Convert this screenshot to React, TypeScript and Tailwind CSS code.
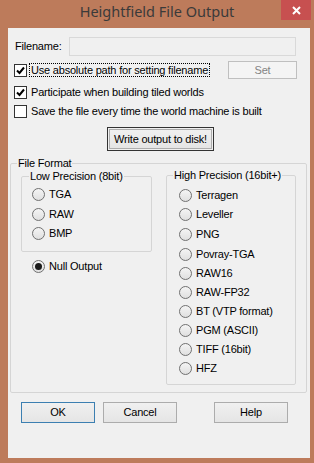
import React from 'react'

const lowFormats = ['TGA', 'RAW', 'BMP']

const highFormats: [string, boolean][] = [
  ['Terragen', false],
  ['Leveller', false],
  ['PNG', true],
  ['Povray-TGA', true],
  ['RAW16', false],
  ['RAW-FP32', false],
  ['BT (VTP format)', false],
  ['PGM (ASCII)', false],
  ['TIFF (16bit)', false],
  ['HFZ', false],
]

function CheckBox({ checked }: { checked: boolean }) {
  return (
    <div className="w-[13px] h-[13px] border border-[#333333] bg-white flex items-center justify-center shrink-0">
      {checked && (
        <svg width="9" height="9" viewBox="0 0 9 9">
          <path d="M1 4.5 L3.5 7 L8 1.5" stroke="#000" strokeWidth="2" fill="none" />
        </svg>
      )}
    </div>
  )
}

function Radio({ label, selected = false }: { label: string; selected?: boolean }) {
  return (
    <div className="flex items-center gap-[4px]">
      <div className="w-[13px] h-[13px] rounded-full border border-[#707070] bg-gradient-to-b from-[#f4f4f4] to-[#e0e0e0] flex items-center justify-center shrink-0">
        {selected && <div className="w-[7px] h-[7px] rounded-full bg-[#1a1a1a]" />}
      </div>
      <span className="whitespace-nowrap">{label}</span>
    </div>
  )
}

function Button({ label, className = '' }: { label: string; className?: string }) {
  return (
    <div className={`w-[74px] h-[21px] border bg-gradient-to-b from-[#f0f0f0] to-[#e5e5e5] flex items-center justify-center ${className}`}>
      {label}
    </div>
  )
}

export default function App() {
  return (
    <div className="w-[314px] h-[463px] bg-[#bd7b5b] flex flex-col font-['Liberation_Sans',Arial,sans-serif] text-[11px] tracking-[-0.2px] text-black">
      {/* title bar */}
      <div className="h-[28px] relative flex items-center justify-center pb-[4px]">
        <span className="font-['Noto_Sans',sans-serif] text-[14.5px] tracking-normal text-[#3a3a3a]">Heightfield File Output</span>
        <div className="absolute right-[3px] top-0 w-[30px] h-[20px] bg-[#c75050] flex items-center justify-center">
          <svg width="9" height="9" viewBox="0 0 9 9">
            <path d="M1 1 L8 8 M8 1 L1 8" stroke="#fff" strokeWidth="2" />
          </svg>
        </div>
      </div>

      {/* client area */}
      <div className="ml-[8px] w-[302px] h-[430px] bg-[#f0f0f0] flex flex-col">
        <div className="mt-[9px] h-[19px] flex items-center">
          <span className="pl-[7px] w-[61px]">Filename:</span>
          <div className="w-[227px] h-[19px] border border-[#d9d9d9] bg-[#f0f0f0]" />
        </div>

        <div className="mt-[5px] h-[18px] flex items-center">
          <div className="ml-[6px]"><CheckBox checked /></div>
          <span className="ml-[2px] border border-dotted border-black px-[1px] leading-[12px] whitespace-nowrap">Use absolute path for setting filename</span>
          <div className="ml-auto mr-[13px] w-[69px] h-[18px] border border-[#bfbfbf] bg-[#f4f4f4] text-[#838383] flex items-center justify-center">Set</div>
        </div>

        <div className="mt-[4px] h-[19px] flex items-center">
          <div className="ml-[6px]"><CheckBox checked /></div>
          <span className="ml-[4px] whitespace-nowrap">Participate when building tiled worlds</span>
        </div>
        <div className="h-[19px] flex items-center">
          <div className="ml-[6px]"><CheckBox checked={false} /></div>
          <span className="ml-[4px] whitespace-nowrap">Save the file every time the world machine is built</span>
        </div>

        <div className="mt-[6px] ml-[99px] w-[107px] h-[24px] border border-[#333333] p-[1px]">
          <div className="w-full h-full border border-[#adadad] bg-gradient-to-b from-[#f0f0f0] to-[#e5e5e5] flex items-center justify-center whitespace-nowrap">
            Write output to disk!
          </div>
        </div>

        <fieldset className="mt-[6px] ml-[2px] w-[287px] h-[236px] border border-[#d5d5d5] rounded-[2px] px-[10px]">
          <legend className="-ml-[4px] px-[1px] leading-[13px] whitespace-nowrap">File Format</legend>
          <div className="flex">
            <div className="flex flex-col">
              <fieldset className="w-[131px] h-[82px] border border-[#d5d5d5] rounded-[2px] pl-[10px]">
                <legend className="-ml-[3px] px-[1px] leading-[13px] whitespace-nowrap">Low Precision (8bit)</legend>
                <div className="mt-[2px] flex flex-col">
                  {lowFormats.map((f, i) => (
                    <div key={f} className={`flex items-center ${i === 1 ? 'h-[20px]' : 'h-[19px]'}`}>
                      <Radio label={f} />
                    </div>
                  ))}
                </div>
              </fieldset>
              <div className="mt-[5px] ml-[11px] h-[19px] flex items-center">
                <Radio label="Null Output" selected />
              </div>
            </div>
            <fieldset className="ml-[14px] -mt-[1px] w-[130px] h-[216px] border border-[#d5d5d5] rounded-[2px] pl-[12px]">
              <legend className="-ml-[6px] px-[1px] leading-[13px] whitespace-nowrap">High Precision (16bit+)</legend>
              <div className="mt-[4px] flex flex-col">
                {highFormats.map(([f, gap]) => (
                  <div key={f} className={`h-[19px] flex items-center ${gap ? 'mt-[1px]' : ''}`}>
                    <Radio label={f} />
                  </div>
                ))}
              </div>
            </fieldset>
          </div>
        </fieldset>

        <div className="mt-[9px] flex">
          <Button label="OK" className="ml-[13px] border-[#3c7fb1]" />
          <Button label="Cancel" className="ml-[8px] border-[#acacac]" />
          <Button label="Help" className="ml-[37px] border-[#acacac]" />
        </div>
      </div>
    </div>
  )
}
